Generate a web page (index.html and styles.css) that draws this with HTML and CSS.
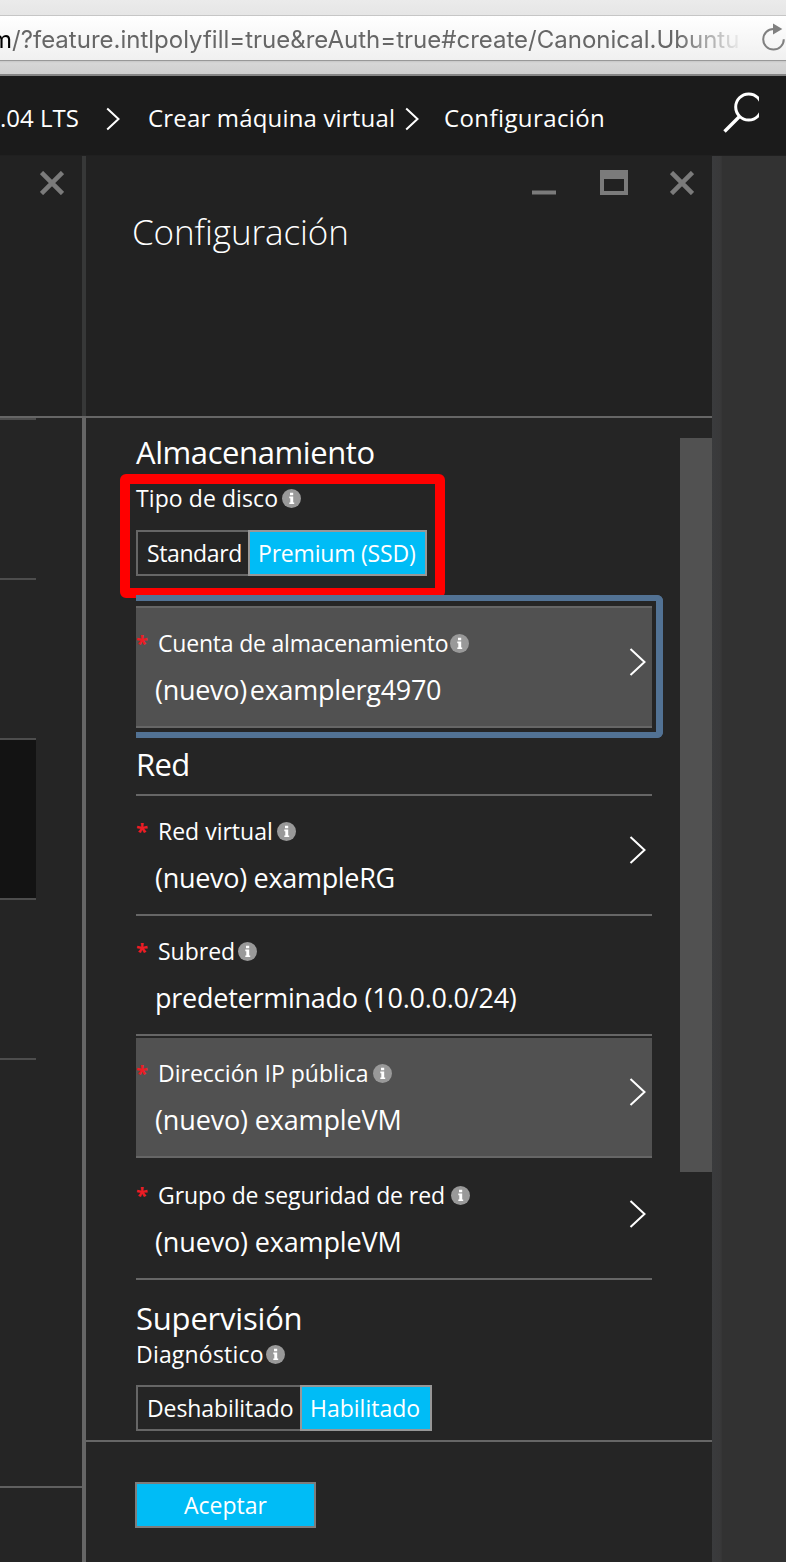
FILE: index.html
```html
<!DOCTYPE html>
<html lang="es">
<head>
<meta charset="utf-8">
<title>Configuración</title>
<link rel="stylesheet" href="styles.css">
</head>
<body>
<svg class="defs" width="0" height="0">
  <symbol id="close" viewBox="0 0 24 24"><path d="M1.5 1.5L22.5 22.5M22.5 1.5L1.5 22.5" fill="none" stroke="#7b7b7b" stroke-width="4.6"/></symbol>
  <symbol id="chevron" viewBox="0 0 18 28"><path d="M1.5 1L15.500 14L1.500 27" fill="none" stroke="#fff" stroke-width="2"/></symbol>
  <symbol id="info" viewBox="0 0 19 19"><circle cx="9.500" cy="9.500" r="9.500" fill="#999"/><path d="M8 3.800h3.200v2.400H8zM7.300 7.600h3.900v5.800h1v1.700H7.300v-1.700h1V9.200h-1z" fill="#fff"/></symbol>
</svg>
<div class="browser">
  <div class="tabstrip"></div>
  <div class="address">
    <div class="url"><span class="host">m</span><span class="path">/?feature.intlpolyfill=true&amp;reAuth=true#create/Canonical.Ubuntu</span></div>
    <svg class="reload" width="26" height="30" viewBox="0 0 26 30"><path d="M13.500 7A10.300 10.300 0 1 0 23.800 17.300" fill="none" stroke="#808080" stroke-width="2"/><path d="M13 1.500L22.300 7L13 12.500z" fill="#808080"/></svg>
  </div>
  <div class="understrip"></div>
</div>
<nav class="crumbs">
  <span class="crumb c1">.04 LTS</span>
  <svg class="sep" width="14" height="24" viewBox="0 0 14 24"><path d="M1.200 1.500L12.500 12L1.200 22.500" fill="none" stroke="#fff" stroke-width="2"/></svg>
  <span class="crumb c2">Crear máquina virtual</span>
  <svg class="sep" width="14" height="24" viewBox="0 0 14 24"><path d="M1.200 1.500L12.500 12L1.200 22.500" fill="none" stroke="#fff" stroke-width="2"/></svg>
  <span class="crumb c3">Configuración</span>
  <svg class="search" width="36" height="42" viewBox="0 0 36 42"><circle cx="25.700" cy="15" r="13" fill="none" stroke="#fff" stroke-width="3"/><path d="M16.500 24.500L1.500 39.500" stroke="#fff" stroke-width="3.400"/></svg>
</nav>
<main class="stage">
  <section class="previous">
    <header class="prev-head"><svg width="24" height="24"><use href="#close"/></svg></header>
    <div class="prev-body">
      <div class="step"></div><div class="step"></div><div class="step active"></div><div class="step"></div><div class="step last"></div>
    </div>
    <div class="prev-foot"></div>
  </section>
  <div class="divider"></div>
  <section class="blade">
    <header class="head">
      <div class="controls">
        <svg width="24" height="24" viewBox="0 0 24 24"><path d="M0 19.500h24v4H0z" fill="#7b7b7b"/></svg>
        <svg width="28" height="25" viewBox="0 0 28 25"><path d="M0 0h28v25H0zM4 9v12h20V9z" fill="#7b7b7b" fill-rule="evenodd"/></svg>
        <svg width="24" height="24"><use href="#close"/></svg>
      </div>
      <h1>Configuración</h1>
    </header>
    <div class="content">
      <div class="form">
        <h2 class="alm">Almacenamiento</h2>
        <div class="field disk">
          <div class="label"><span class="t-tipo">Tipo de disco</span><svg width="19" height="19"><use href="#info"/></svg></div>
          <div class="toggle"><span class="opt o-std">Standard</span><span class="opt on o-prem">Premium (SSD)</span></div>
          <div class="highlight"></div>
        </div>
        <div class="row filled focused">
          <div class="label"><b>*</b><span class="t-cuenta">Cuenta de almacenamiento</span><svg width="19" height="19"><use href="#info"/></svg></div>
          <div class="value v-acc"><span>(nuevo)</span><span>examplerg4970</span></div>
          <svg class="chev" width="18" height="28"><use href="#chevron"/></svg>
          <div class="ring"></div>
        </div>
        <h2 class="red">Red</h2>
        <div class="row first">
          <div class="label"><b>*</b><span class="t-red">Red virtual</span><svg width="19" height="19"><use href="#info"/></svg></div>
          <div class="value v-rg">(nuevo) exampleRG</div>
          <svg class="chev" width="18" height="28"><use href="#chevron"/></svg>
        </div>
        <div class="row plain">
          <div class="label"><b>*</b><span class="t-sub">Subred</span><svg width="19" height="19"><use href="#info"/></svg></div>
          <div class="value v-net">predeterminado (10.0.0.0/24)</div>
        </div>
        <div class="row filled hover">
          <div class="label"><b>*</b><span class="t-ip">Dirección IP pública</span><svg width="19" height="19"><use href="#info"/></svg></div>
          <div class="value v-vm">(nuevo) exampleVM</div>
          <svg class="chev" width="18" height="28"><use href="#chevron"/></svg>
        </div>
        <div class="row group">
          <div class="label"><b>*</b><span class="t-grupo">Grupo de seguridad de red</span><svg width="19" height="19"><use href="#info"/></svg></div>
          <div class="value v-vm">(nuevo) exampleVM</div>
          <svg class="chev" width="18" height="28"><use href="#chevron"/></svg>
        </div>
        <h2 class="sup">Supervisión</h2>
        <div class="field">
          <div class="label"><span class="t-diag">Diagnóstico</span><svg width="19" height="19"><use href="#info"/></svg></div>
          <div class="toggle"><span class="opt o-des">Deshabilitado</span><span class="opt on o-hab">Habilitado</span></div>
        </div>
      </div>
      <div class="scrollbar"></div>
    </div>
    <footer class="foot"><button class="accept">Aceptar</button></footer>
  </section>
  <div class="edge"></div>
</main>
</body>
</html>
```
FILE: styles.css
```css
* { box-sizing: border-box; }
body { margin: 0; width: 786px; height: 1562px; overflow: hidden; background: #323232; color: #fff; font-family: "Open Sans", "Noto Sans", sans-serif; display: flex; flex-direction: column; }
svg { display: block; flex: none; }
.defs { position: absolute; }
h1, h2 { margin: 0; font-weight: 400; white-space: nowrap; }

.browser { height: 76px; flex: none; }
.tabstrip { height: 16px; background: linear-gradient(#ebebeb, #e6e6e6); border-bottom: 1px solid #c6c6c6; }
.address { height: 45px; display: flex; background: linear-gradient(#fff, #f0f0f0); border-bottom: 1px solid #989898; }
.url { width: 742px; height: 44px; margin-left: -9px; overflow: hidden; flex: none; font: 400 24px/47px Inter, sans-serif; white-space: nowrap; color: #666; -webkit-mask-image: linear-gradient(90deg, #000 685px, transparent 754px); mask-image: linear-gradient(90deg, #000 685px, transparent 754px); }
.url { width: 752px; }
.host { color: #000; }
.reload { margin: 6px 0 0 17px; }
.understrip { height: 15px; background: linear-gradient(#c6c6c6 0, #d6d6d6 2px, #cfcfcf 13px, #858585 13px, #858585 15px); }

.crumbs { height: 80px; flex: none; display: flex; background: #1b1b1b; border-bottom: 1px solid #202020; overflow: hidden; }
.crumb { font-size: 24px; line-height: 84px; white-space: nowrap; flex: none; }
.c1 { width: 106px; }
.c2 { width: 285px; padding-left: 28px; letter-spacing: .17px; }
.c3 { padding-left: 25px; width: 304px; letter-spacing: .4px; }
.sep { margin-top: 31px; }
.search { margin-top: 16px; }

.stage { flex: 1; min-height: 0; display: flex; }
.previous { width: 82px; display: flex; flex-direction: column; background: #252525; }
.prev-head { height: 262px; flex: none; padding: 15px 0 0 40px; background: #222; border-bottom: 2px solid #666; }
.prev-body { flex: 1; }
.step { width: 36px; height: 160px; border-top: 2px solid #4d4d4d; }
.step.active { background: #131313; }
.step.last { height: 2px; }
.prev-foot { height: 76px; border-top: 2px solid #606060; }
.divider { width: 4px; background: linear-gradient(#373838 260px, #666 260px); }

.blade { width: 626px; display: flex; flex-direction: column; background: #252525; }
.head { height: 262px; flex: none; background: #222; border-bottom: 2px solid #666; }
.controls { display: flex; align-items: flex-start; justify-content: flex-end; padding: 14px 18px 0 0; height: 46px; }
.controls svg:nth-child(2) { margin: 0 42px 0 44px; }
.controls svg:nth-child(1), .controls svg:nth-child(3) { margin-top: 1px; }
h1 { padding-left: 46px; font-size: 35px; font-weight: 300; line-height: 60px; letter-spacing: -.1px; }
.content { height: 1022px; flex: none; display: flex; justify-content: space-between; overflow: hidden; }
.form { width: 516px; margin-left: 50px; }
.scrollbar { width: 32px; height: 734px; margin-top: 20px; background: #515151; }
h2 { font-size: 31px; line-height: 40px; }
.alm { padding-top: 14px; letter-spacing: -.42px; }
.red { margin-top: 16px; height: 50px; letter-spacing: -.6px; }
.sup { padding-top: 18px; letter-spacing: -.2px; }

.label { display: flex; align-items: center; height: 32px; font-size: 23px; line-height: 32px; white-space: nowrap; }
.label b { width: 22px; height: 32px; color: #ec1c24; font-size: 22px; line-height: 30px; }
.field { position: relative; }
.disk { height: 116px; padding-top: 10px; }
.t-tipo { width: 146px; letter-spacing: .08px; }
.t-cuenta { width: 292px; letter-spacing: -.2px; }
.t-red { width: 119px; }
.t-sub { width: 80px; }
.t-ip { width: 215px; }
.t-grupo { width: 293px; letter-spacing: -.08px; }
.t-diag { width: 130px; letter-spacing: .2px; }
.toggle { display: flex; height: 46px; margin-top: 15px; }
.disk .toggle { margin-top: 16px; }
.opt { border: 2px solid #666; border-right: 0; padding-left: 9px; font-size: 23px; line-height: 42px; white-space: nowrap; }
.opt.on { border: 2px solid #979797; background: #00bcf6; padding-left: 8px; }
.o-std { width: 112px; letter-spacing: -.4px; }
.o-prem { width: 179px; letter-spacing: -.2px; }
.o-des { width: 164px; letter-spacing: -.1px; }
.o-hab { width: 132px; }
.highlight { position: absolute; left: -16px; top: 2px; width: 325px; height: 124px; border: 10px solid #f00; border-radius: 6px; }

.row { position: relative; height: 120px; padding-top: 19px; border-bottom: 2px solid #666; }
.row.first { height: 122px; border-top: 2px solid #666; }
.row.filled { background: #515151; }
.row.focused { height: 122px; margin-top: 18px; border-top: 2px solid #666; }
.row.hover { margin-top: 2px; }
.row.group { height: 122px; padding-top: 21px; }
.value { padding-left: 19px; height: 32px; margin-top: 15px; font-size: 27px; line-height: 32px; white-space: nowrap; }
.v-acc { display: flex; gap: 3px; letter-spacing: -.3px; }
.v-rg { letter-spacing: -.3px; }
.v-net { letter-spacing: -.25px; }
.v-vm { letter-spacing: -.15px; }
.chev { position: absolute; right: 5px; top: 40px; }
.group .chev { top: 42px; }
.ring { position: absolute; left: 0; top: -13px; width: 527px; height: 143px; border: 6px solid #527294; border-left: 0; border-right-width: 7px; border-radius: 0 6px 6px 0; }

.foot { flex: 1; padding: 40px 0 0 49px; border-top: 2px solid #666; }
.accept { display: block; width: 181px; height: 46px; padding: 0; border: 2px solid #7d7d7d; background: #00bcf6; color: #fff; font: 23px/42px "Open Sans", sans-serif; }
.edge { width: 10px; background: linear-gradient(90deg, #3a3b3d, #39393a 80%, #353535); }
```
